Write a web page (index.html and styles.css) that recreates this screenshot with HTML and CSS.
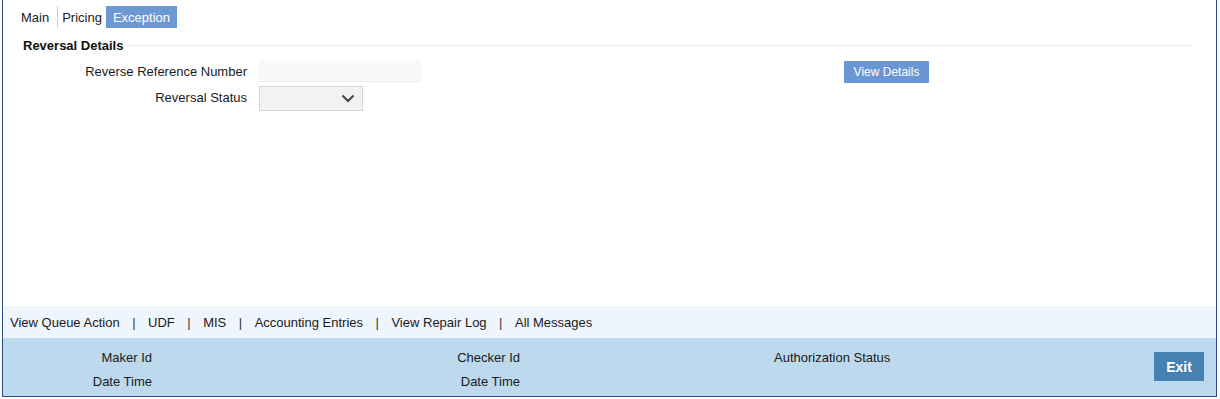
FILE: index.html
```html
<!DOCTYPE html>
<html lang="en">
<head>
<meta charset="utf-8">
<title>Reversal Details</title>
<link rel="stylesheet" href="styles.css">
</head>
<body>
<div class="frame">
  <div class="main">
    <div class="tabs">
      <span class="tab tab-main">Main</span>
      <span class="tab tab-pricing">Pricing</span>
      <span class="tab tab-active">Exception</span>
    </div>
    <div class="section-head">
      <span class="section-title">Reversal Details</span>
      <span class="section-rule"></span>
    </div>
    <div class="form">
      <label class="lbl">Reverse Reference Number</label>
      <div class="field"><input class="txt" type="text"></div>
      <div class="btn-cell"><button class="btn-view">View Details</button></div>
      <label class="lbl lbl2">Reversal Status</label>
      <div class="field">
        <div class="select">
          <svg class="chev" width="14" height="9" viewBox="0 0 14 9"><polyline points="1.5,1.5 7,7 12.5,1.5" fill="none" stroke="#444" stroke-width="2"/></svg>
        </div>
      </div>
    </div>
  </div>
  <div class="links">
    <span class="link">View Queue Action</span><span class="sep">|</span>
    <span class="link">UDF</span><span class="sep">|</span>
    <span class="link">MIS</span><span class="sep">|</span>
    <span class="link">Accounting Entries</span><span class="sep">|</span>
    <span class="link">View Repair Log</span><span class="sep">|</span>
    <span class="link">All Messages</span>
  </div>
  <div class="footer">
    <div class="audit">
      <span class="a-lbl c1">Maker Id</span>
      <span class="a-lbl c2">Checker Id</span>
      <span class="a-lbl c3">Authorization Status</span>
      <span class="a-lbl c1">Date Time</span>
      <span class="a-lbl c2">Date Time</span>
      <span class="a-lbl c3"></span>
    </div>
    <button class="btn-exit">Exit</button>
  </div>
</div>
</body>
</html>
```
FILE: styles.css
```css
html, body {
  margin: 0;
  padding: 0;
  background: #ffffff;
}
body {
  font-family: "Liberation Sans", Arial, sans-serif;
  font-size: 13px;
  color: #1a1a1a;
}
.frame {
  margin-left: 2px;
  width: 1213px;
  height: 396px;
  border: 1px solid #2b4b8c;
  border-top: none;
  display: flex;
  flex-direction: column;
  background: #fff;
}
.main {
  flex: 1;
  padding-top: 6px;
}
.tabs {
  display: flex;
  padding-left: 11px;
  height: 22px;
}
.tab {
  line-height: 23px;
  height: 22px;
  font-size: 13px;
  color: #1a1a1a;
}
.tab-main {
  padding: 0 8px 0 7px;
}
.tab-pricing {
  border-left: 1px solid #cfcfcf;
  padding: 0 4px;
}
.tab-active {
  background: #6c98d4;
  color: #ffffff;
  padding: 0 7px;
}
.section-head {
  display: flex;
  align-items: center;
  margin-top: 9px;
  padding-left: 20px;
  padding-right: 25px;
  height: 16px;
}
.section-title {
  font-weight: bold;
  font-size: 13px;
  color: #111;
}
.section-rule {
  flex: 1;
  height: 1px;
  background: #e8e8e8;
  margin-left: 3px;
}
.form {
  margin-top: 8px;
  display: grid;
  grid-template-columns: 244px 573px auto;
  grid-template-rows: 21px 25px;
  column-gap: 12px;
  row-gap: 4px;
}
.lbl {
  text-align: right;
  line-height: 21px;
  font-size: 13px;
  color: #1a1a1a;
}
.lbl2 {
  line-height: 23px;
}
.txt {
  display: block;
  box-sizing: border-box;
  width: 162px;
  height: 21px;
  margin: 0;
  border: none;
  border-bottom: 1px solid #ececec;
  background: #f9f9f9;
  padding: 0 4px;
  font: inherit;
}
.btn-cell {
  display: flex;
  align-items: flex-start;
}
.btn-view {
  width: 85px;
  height: 22px;
  border: none;
  background: #6a96d3;
  color: #ffffff;
  font-family: "Liberation Sans", Arial, sans-serif;
  font-size: 12px;
  padding: 0;
}
.select {
  box-sizing: border-box;
  width: 104px;
  height: 25px;
  border: 1px solid #d6d6d6;
  background: #f3f2f0;
  display: flex;
  align-items: center;
  justify-content: flex-end;
  padding-right: 7px;
}
.chev {
  display: block;
}
.links {
  height: 32px;
  background: #eef5fd;
  display: flex;
  align-items: center;
  padding-left: 7px;
  font-size: 13px;
  color: #1a1a1a;
}
.sep {
  margin: 0 12.5px;
  color: #333;
}
.footer {
  height: 58px;
  background: #bdd9ed;
  display: flex;
  justify-content: space-between;
  align-items: flex-start;
}
.audit {
  display: grid;
  grid-template-columns: 149px 368px 254px;
  grid-auto-rows: 24px;
  padding-top: 8px;
}
.a-lbl {
  line-height: 24px;
  font-size: 13px;
  color: #1a1a1a;
}
.c1, .c2 {
  text-align: right;
}
.audit .c3 {
  grid-column: 3;
  justify-self: end;
  width: 0;
  white-space: nowrap;
  text-align: left;
}
.btn-exit {
  margin-top: 14px;
  margin-right: 12px;
  width: 50px;
  height: 29px;
  border: none;
  background: #4781b1;
  color: #ffffff;
  font-family: "Liberation Sans", Arial, sans-serif;
  font-weight: bold;
  font-size: 14px;
  padding: 0;
}
```
